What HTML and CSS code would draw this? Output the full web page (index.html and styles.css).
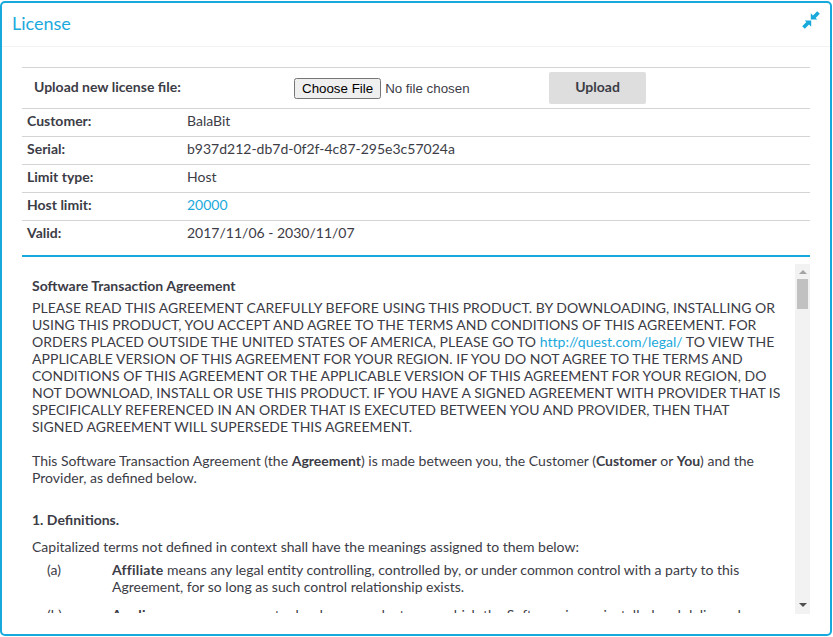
FILE: index.html
```html
<!DOCTYPE html>
<html lang="en">
<head>
<meta charset="utf-8">
<title>License</title>
<link rel="stylesheet" href="styles.css">
</head>
<body>
<div class="dialog">
  <header class="head">
    <h1 class="title">License</h1>
    <svg class="shrink" width="18" height="18" viewBox="0 0 18 18" aria-hidden="true">
      <path d="M8.8 8.6V2.2L11 4.4 15.2.2 17.8 2.8 13.6 7 15.4 8.6Z"/>
      <path d="M9.2 9.4V15.8L7 13.6 2.8 17.8.2 15.2 4.4 11 2.6 9.4Z"/>
    </svg>
  </header>
  <main class="body">
    <form class="upload">
      <label class="upload-label" for="lic">Upload new license file:</label>
      <input class="file" id="lic" type="file">
      <button class="upload-btn" type="button">Upload</button>
    </form>
    <dl class="info">
      <div class="row"><dt>Customer:</dt><dd>BalaBit</dd></div>
      <div class="row"><dt>Serial:</dt><dd>b937d212-db7d-0f2f-4c87-295e3c57024a</dd></div>
      <div class="row"><dt>Limit type:</dt><dd>Host</dd></div>
      <div class="row"><dt>Host limit:</dt><dd><a href="#">20000</a></dd></div>
      <div class="row"><dt>Valid:</dt><dd>2017/11/06 - 2030/11/07</dd></div>
    </dl>
    <section class="agreement">
      <div class="text">
        <p class="agr-title"><b>Software Transaction Agreement</b></p>
        <p class="para caps">PLEASE READ THIS AGREEMENT CAREFULLY BEFORE USING THIS PRODUCT. BY DOWNLOADING, INSTALLING OR USING THIS PRODUCT, YOU ACCEPT AND AGREE TO THE TERMS AND CONDITIONS OF THIS AGREEMENT. FOR ORDERS PLACED OUTSIDE THE UNITED STATES OF AMERICA, PLEASE GO TO <a href="#">http://quest.com/legal/</a> TO VIEW THE APPLICABLE VERSION OF THIS AGREEMENT FOR YOUR REGION. IF YOU DO NOT AGREE TO THE TERMS AND CONDITIONS OF THIS AGREEMENT OR THE APPLICABLE VERSION OF THIS AGREEMENT FOR YOUR REGION, DO NOT DOWNLOAD, INSTALL OR USE THIS PRODUCT. IF YOU HAVE A SIGNED AGREEMENT WITH PROVIDER THAT IS SPECIFICALLY REFERENCED IN AN ORDER THAT IS EXECUTED BETWEEN YOU AND PROVIDER, THEN THAT SIGNED AGREEMENT WILL SUPERSEDE THIS AGREEMENT.</p>
        <p class="para">This Software Transaction Agreement (the <b>Agreement</b>) is made between you, the Customer (<b>Customer</b> or <b>You</b>) and the Provider, as defined below.</p>
        <p class="section-head"><b>1. Definitions.</b></p>
        <p class="intro">Capitalized terms not defined in context shall have the meanings assigned to them below:</p>
        <div class="def"><span class="mark">(a)</span><p><b>Affiliate</b> means any legal entity controlling, controlled by, or under common control with a party to this Agreement, for so long as such control relationship exists.</p></div>
        <div class="def"><span class="mark">(b)</span><p><b>Appliance</b> means a computer hardware product upon which the Software is pre-installed and delivered.</p></div>
      </div>
      <div class="scrollbar">
        <span class="arrow-up"></span>
        <span class="thumb"></span>
        <span class="arrow-down"></span>
      </div>
    </section>
  </main>
</div>
</body>
</html>
```
FILE: styles.css
```css
* { box-sizing: border-box; }
html, body { margin: 0; height: 100%; background: #fff; }
body { padding: 1px 1px 1px 0; font: 14px/17px Lato, sans-serif; color: #3c3c46; }
a { color: #1ba9dc; text-decoration: none; }
b { font-weight: 700; }
p { margin: 0; }

.dialog {
  height: 635px;
  border: 2px solid #17a9dc;
  border-radius: 5px;
  background: #fff;
  overflow: hidden;
}
.head {
  height: 44px;
  padding: 0 10px 0 10px;
  display: flex;
  justify-content: space-between;
  align-items: flex-start;
  border-bottom: 1px solid #f3f3f3;
}
.title {
  margin: 9px 0 0;
  font-size: 18px;
  line-height: 22px;
  font-weight: 400;
  color: #1ba9dc;
}
.shrink { margin-top: 8px; fill: #17a9dc; }

.body { padding: 20px 20px 0; }
.upload {
  height: 42px;
  display: flex;
  align-items: center;
  border-top: 1px solid #d4d4d4;
  border-bottom: 1px solid #d4d4d4;
}
.upload-label { width: 272px; padding-left: 12px; font-weight: 700; margin-top: -4px; }
.file { width: 255px; font: 13.33px "Liberation Sans", sans-serif; color: #3c3c46; margin-top: 1px; }
.upload-btn {
  width: 97px;
  height: 32px;
  border: 0;
  border-radius: 2px;
  background: #dddedd;
  font: 700 14px Lato, sans-serif;
  color: #3c3c46;
  margin-top: -1px;
  padding-bottom: 3px;
}
.info { margin: 0; }
.row {
  height: 28px;
  display: flex;
  align-items: center;
  padding: 0 0 4px 5px;
  border-bottom: 1px solid #d4d4d4;
}
.row:last-child { height: 27px; border-bottom: 0; }
dt { width: 160px; font-weight: 700; }
dd { margin: 0; }

.agreement {
  height: 370px;
  padding-top: 7px;
  margin-top: 7px;
  border-top: 2px solid #17a9dc;
  display: flex;
}
.text {
  flex: 1;
  height: 349px;
  overflow: hidden;
  padding: 13px 10px 0;
}
.agr-title { margin-bottom: 5px; }
.para { margin-bottom: 17px; }
.caps { letter-spacing: 0.03px; padding-right: 2px; }
.section-head { margin: 25px 0 10px; }
.intro { margin-bottom: 6px; }
.def { display: flex; padding-left: 15px; margin-bottom: 11px; }
.def b { letter-spacing: 0.2px; }
.mark { width: 65px; flex: none; }

.scrollbar {
  width: 15px;
  height: 350px;
  flex: none;
  background: #f1f2f1;
  position: relative;
}
.thumb {
  position: absolute;
  left: 2px;
  top: 15px;
  width: 11px;
  height: 30px;
  background: #c1c1c1;
}
.arrow-up, .arrow-down {
  position: absolute;
  left: 4px;
  width: 0;
  height: 0;
  border-left: 4px solid transparent;
  border-right: 4px solid transparent;
}
.arrow-up { top: 6px; border-bottom: 4px solid #a3a3a3; }
.arrow-down { bottom: 7px; border-top: 4px solid #505050; }
```
